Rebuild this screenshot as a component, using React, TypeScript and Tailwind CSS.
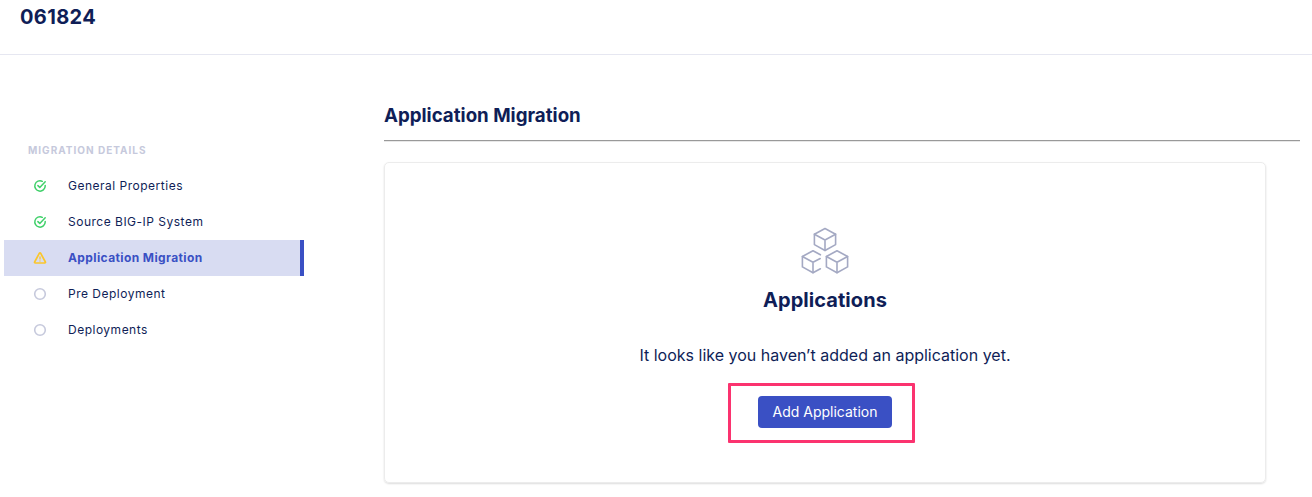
type Status = 'done' | 'warning' | 'pending';

const steps: { label: string; status: Status; active?: boolean }[] = [
  { label: 'General Properties', status: 'done' },
  { label: 'Source BIG-IP System', status: 'done' },
  { label: 'Application Migration', status: 'warning', active: true },
  { label: 'Pre Deployment', status: 'pending' },
  { label: 'Deployments', status: 'pending' },
];

function StatusIcon({ status }: { status: Status }) {
  if (status === 'done') {
    return (
      <svg width="14" height="14" viewBox="0 0 14 14" fill="none" stroke="#3fd069" strokeWidth="1.5" strokeLinecap="round" strokeLinejoin="round">
        <path d="M12.2 6.5V7A5.2 5.2 0 1 1 9.3 2.3" />
        <path d="M4.9 6.6L6.8 8.4L12.2 2.8" />
      </svg>
    );
  }
  if (status === 'warning') {
    return (
      <svg width="14" height="14" viewBox="0 0 14 14" fill="none" stroke="#fac62d" strokeWidth="1.7" strokeLinecap="round" strokeLinejoin="round">
        <path d="M6.4 2.2a.7.7 0 0 1 1.2 0l4.8 8.8a.7.7 0 0 1-.6 1H2.2a.7.7 0 0 1-.6-1z" />
        <path d="M7 5.8v2.3M7 10v.1" strokeWidth="1.3" />
      </svg>
    );
  }
  return (
    <svg width="14" height="14" viewBox="0 0 14 14" fill="none" stroke="#c6c9dc" strokeWidth="1.6">
      <circle cx="7" cy="7" r="5.3" />
    </svg>
  );
}

function CubesIcon() {
  return (
    <svg width="48" height="48" viewBox="0 0 48 48" fill="none" stroke="#a4a9c3" strokeWidth="1.6" strokeLinejoin="round" strokeLinecap="round">
      <path d="M24 1.5L34.6 7.2V17.6L24 23.5L13.4 17.6V7.2z" />
      <path d="M13.4 7.2L24 13L34.6 7.2M24 13V23.5" />
      <path d="M36 23.8L46.6 29.5V39.9L36 45.8L25.4 39.9V29.5z" />
      <path d="M25.4 29.5L36 35.3L46.6 29.5M36 35.3V45.8" />
      <path d="M19.4 27.8L12 23.8L1.4 29.5V39.9L12 45.8L19.4 41.8" />
      <path d="M1.4 29.5L12 35.3L19.2 31.5M12 35.3V45.8" />
    </svg>
  );
}

export default function App() {
  return (
    <div className="flex h-[497px] w-[1312px] flex-col overflow-hidden bg-white font-['Inter',sans-serif] text-[#0f1e57]">
      <header className="h-[55px] shrink-0 border-b border-[#e6e7f1] pl-5 pt-[3px]">
        <h1 className="text-[20px] font-bold leading-7 tracking-[0.35px]">061824</h1>
      </header>
      <div className="flex flex-1">
        <nav className="w-[304px] shrink-0 pl-1 pt-[87px]">
          <h2 className="pl-6 text-[10px] font-bold leading-4 tracking-[1px] text-[#c6c9dc]">MIGRATION DETAILS</h2>
          <ul className="pt-[10px]">
            {steps.map((step) => (
              <li
                key={step.label}
                className={
                  step.active
                    ? 'flex h-9 items-center border-r-4 border-[#3a50c4] bg-[#d8dcf2] pl-[29px] text-[12px] font-bold tracking-[0.4px] text-[#3a50c4]'
                    : 'flex h-9 items-center pl-[29px] text-[12px] tracking-[0.5px]'
                }
              >
                <StatusIcon status={step.status} />
                <span className="pl-[21px]">{step.label}</span>
              </li>
            ))}
          </ul>
        </nav>
        <main className="flex-1 pl-20 pr-3 pt-[47px]">
          <h2 className="h-[38px] text-[18.72px] font-bold leading-7">Application Migration</h2>
          <div className="h-0.5 border-b border-t border-b-[#e8e8e8] border-t-[#999999]" />
          <section className="mt-5 flex h-[321px] w-[882px] flex-col items-center rounded-[5px] border border-[#ececec] pt-[64px] shadow-[0_1px_2px_rgba(0,0,0,0.14)]">
            <CubesIcon />
            <h3 className="mt-[11px] text-[20px] font-bold leading-7 tracking-[0.05px]">Applications</h3>
            <p className="mt-[27px] text-[16px] leading-7">It looks like you haven’t added an application yet.</p>
            <div className="-ml-[7px] mt-[14px] flex h-[60px] w-[187px] items-center justify-center rounded-[1px] border-[3px] border-[#fb336f] pb-[2px] pl-[7px]">
              <button className="h-8 w-[134px] rounded bg-[#3a50c4] pb-px text-[14px] text-white">Add Application</button>
            </div>
          </section>
        </main>
      </div>
    </div>
  );
}
